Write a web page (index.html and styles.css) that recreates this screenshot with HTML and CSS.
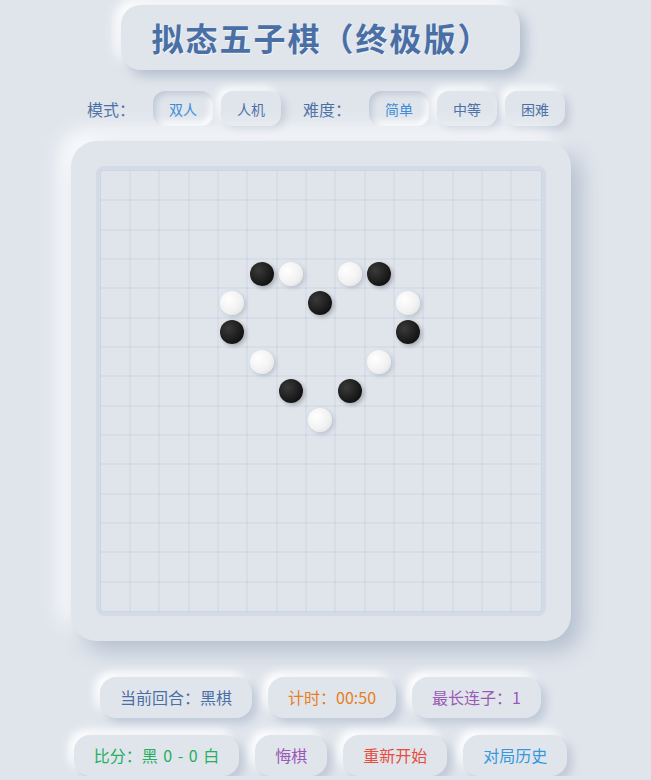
FILE: index.html
```html
<!DOCTYPE html>
<html lang="zh-CN">
  <head>
    <meta charset="UTF-8" />
    <meta name="viewport" content="width=device-width, initial-scale=1.0" />
    <title>拟态五子棋（终极版）</title>
    <link rel="stylesheet" href="styles.css">
  </head>
  <body>
    <div class="app">
      <h1 class="title">拟态五子棋（终极版）</h1>

      <div class="controls">
        <div class="group">
          <span class="label">模式：</span>
          <button class="btn active">双人</button>
          <button class="btn">人机</button>
        </div>
        <div class="group">
          <span class="label">难度：</span>
          <button class="btn active">简单</button>
          <button class="btn">中等</button>
          <button class="btn">困难</button>
        </div>
      </div>

      <div class="board-wrap">
        <div class="board" id="board"></div>
      </div>

      <div class="status-row">
        <div class="pill turn">当前回合：黑棋</div>
        <div class="pill timer">计时：00:50</div>
        <div class="pill streak">最长连子：1</div>
      </div>
      <div class="status-row second">
        <div class="pill score">比分：黑 0 - 0 白</div>
        <button class="pill undo">悔棋</button>
        <button class="pill restart">重新开始</button>
        <button class="pill history">对局历史</button>
      </div>
    </div>

    <script>
      const SIZE = 15;
      const stones = {
        "3,5": "black", "3,6": "white", "3,8": "white", "3,9": "black",
        "4,4": "white", "4,7": "black", "4,10": "white",
        "5,4": "black", "5,10": "black",
        "6,5": "white", "6,9": "white",
        "7,6": "black", "7,8": "black",
        "8,7": "white"
      };
      const board = document.getElementById("board");
      for (let r = 0; r < SIZE; r++) {
        for (let c = 0; c < SIZE; c++) {
          const cell = document.createElement("div");
          cell.className = "cell";
          const color = stones[r + "," + c];
          if (color) {
            const stone = document.createElement("div");
            stone.className = "stone " + color;
            cell.appendChild(stone);
          }
          board.appendChild(cell);
        }
      }
    </script>
  </body>
</html>
```

FILE: styles.css
```css
body {
  margin: 0;
  padding: 0;
  background-color: #e0e5ec;
  font-family: "Noto Sans CJK SC", "Noto Sans", sans-serif;
  color: #4a6fa5;
}

.app {
  width: 641px;
  display: flex;
  flex-direction: column;
  align-items: center;
  padding-top: 5px;
}

.title {
  margin: 0;
  height: 65px;
  line-height: 65px;
  padding: 0 28px 0 30px;
  font-size: 32px;
  font-weight: bold;
  letter-spacing: 2px;
  color: #4a6fa5;
  border-radius: 20px;
  background-color: #e0e5ec;
  box-shadow: 6px 6px 12px #b4bece, -6px -6px 12px #ffffff;
  text-shadow: 1px 1px 1px rgba(255, 255, 255, 0.6);
}

.controls {
  display: flex;
  align-items: center;
  gap: 22px;
  margin-top: 21px;
  margin-left: 11px;
}

.group {
  display: flex;
  align-items: center;
  gap: 8px;
}

.label {
  font-size: 16px;
  margin-right: 10px;
  color: #4a6fa5;
}

.btn {
  height: 35px;
  padding: 0 16px;
  border: none;
  border-radius: 12px;
  background-color: #e0e5ec;
  font-family: inherit;
  font-size: 14px;
  color: #4a6fa5;
  cursor: pointer;
  box-shadow: 4px 4px 8px #bec8d6, -4px -4px 8px #ffffff;
}

.btn.active {
  color: #3a8ad6;
  box-shadow: inset 3px 3px 6px #bec8d6, inset -3px -3px 6px #ffffff;
}

.board-wrap {
  margin-top: 15px;
  padding: 25px;
  border-radius: 26px;
  background-color: #e0e5ec;
  box-shadow: 10px 10px 22px #b4bfce, -10px -10px 22px #ffffff;
}

.board {
  display: grid;
  grid-template-columns: repeat(15, 1fr);
  grid-template-rows: repeat(15, 1fr);
  width: 440px;
  height: 440px;
  border: 5px solid #d3dbe7;
  border-radius: 8px;
  background-color: #e0e5ec;
}

.cell {
  display: flex;
  align-items: center;
  justify-content: center;
  outline: 1px solid rgba(170, 185, 210, 0.14);
  outline-offset: -0.5px;
}

.stone {
  width: 24px;
  height: 24px;
  border-radius: 50%;
  position: relative;
  z-index: 1;
}

.stone.black {
  background: radial-gradient(circle at 35% 35%, #3a3a3a, #141414 70%);
  box-shadow: 2px 2px 4px rgba(0, 0, 0, 0.25);
}

.stone.white {
  background: radial-gradient(circle at 35% 35%, #ffffff, #f2f2f2 55%, #dcdcdc);
  box-shadow: 2px 2px 4px rgba(120, 130, 150, 0.35);
}

.status-row {
  display: flex;
  gap: 16px;
  margin-top: 36px;
}

.status-row.second {
  margin-top: 17px;
}

.pill {
  height: 41px;
  line-height: 41px;
  padding: 0 20px;
  border: none;
  border-radius: 16px;
  background-color: #e0e5ec;
  font-family: inherit;
  font-size: 16px;
  white-space: nowrap;
  box-shadow: 5px 5px 10px #bec8d6, -5px -5px 10px #ffffff;
}

button.pill {
  cursor: pointer;
}

.score {
  word-spacing: 2px;
}

.turn { color: #4a6fa5; }
.timer { color: #e67e22; }
.streak { color: #9b59b6; }
.score { color: #27ae60; }
.undo { color: #9b59b6; }
.restart { color: #e74c3c; }
.history { color: #3498db; }
```
